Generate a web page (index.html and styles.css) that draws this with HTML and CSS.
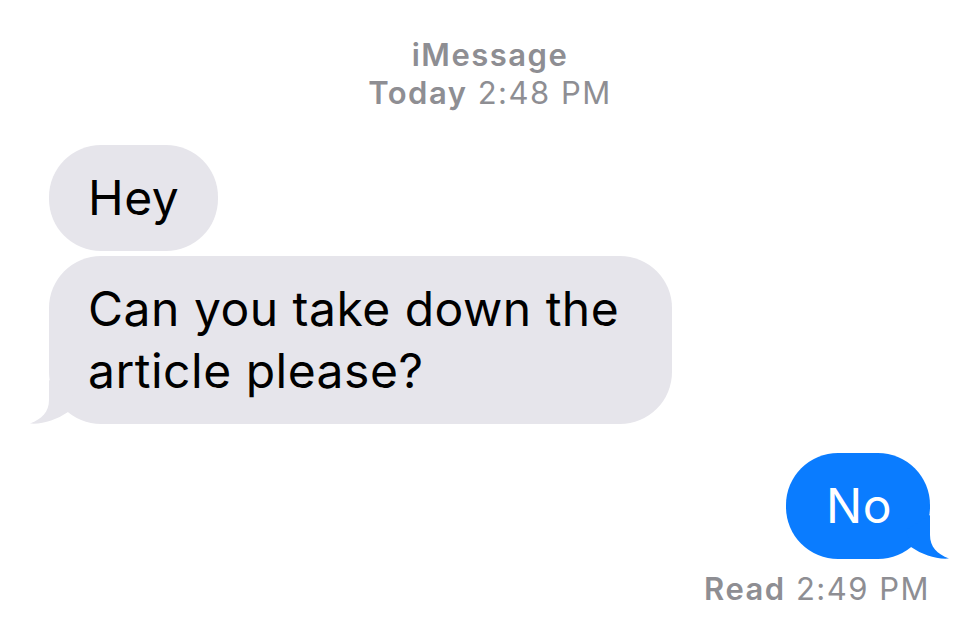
FILE: index.html
```html
<!DOCTYPE html>
<html lang="en">
<head>
  <meta charset="UTF-8">
  <meta name="viewport" content="width=device-width, initial-scale=1.0">
  <title>iMessage</title>
  <link rel="stylesheet" href="styles.css">
</head>
<body>
  <div class="chat">
    <div class="chat-header">
      <div class="service">iMessage</div>
      <div class="stamp"><strong>Today</strong> 2:48 PM</div>
    </div>

    <div class="group them">
      <div class="bubble">Hey</div>
      <div class="bubble">
        Can you take down the article please?
        <svg class="tail" viewBox="0 0 48 48" width="48" height="48"><path d="M20 4V24C20 36 13 43 1 47.5C14 48.5 27 44 39 36L44 19Z"/></svg>
      </div>
    </div>

    <div class="group me">
      <div class="bubble">
        No
        <svg class="tail" viewBox="0 0 48 48" width="48" height="48"><path d="M20 4V24C20 36 13 43 1 47.5C14 48.5 27 44 39 36L44 19Z"/></svg>
      </div>
      <div class="receipt"><strong>Read</strong> 2:49 PM</div>
    </div>
  </div>
</body>
</html>
```

FILE: styles.css
```css
body {
  margin: 0;
  background: #fff;
  font-family: Inter, "Noto Sans", Arial, sans-serif;
}
.chat {
  display: flex;
  flex-direction: column;
  padding: 36px 50px 0 49px;
}
.chat-header {
  text-align: center;
  color: #8e8e93;
  font-size: 31px;
  line-height: 38px;
  letter-spacing: 1.5px;
  padding-left: 1px;
}
.service,
.chat-header strong,
.receipt strong {
  font-weight: 600;
}
.group {
  display: flex;
  flex-direction: column;
  gap: 5px;
}
.them {
  align-items: flex-start;
  margin-top: 33px;
}
.me {
  align-items: flex-end;
  margin-top: 29px;
}
.bubble {
  position: relative;
  box-sizing: border-box;
  max-width: 623px;
  padding: 22px 39px;
  border-radius: 52px;
  font-size: 48px;
  line-height: 62px;
  letter-spacing: 0.5px;
  color: #000;
  background: #e6e5eb;
}
.me .bubble {
  padding-left: 40px;
  padding-right: 38px;
  color: #fff;
  background: #0a7cff;
}
.tail {
  position: absolute;
  bottom: 0;
  left: -20px;
  fill: #e6e5eb;
}
.me .tail {
  left: auto;
  right: -20px;
  fill: #0a7cff;
  transform: scaleX(-1);
}
.receipt {
  margin-top: 7px;
  font-size: 31px;
  line-height: 36px;
  letter-spacing: 1.5px;
  color: #8e8e93;
}
```
